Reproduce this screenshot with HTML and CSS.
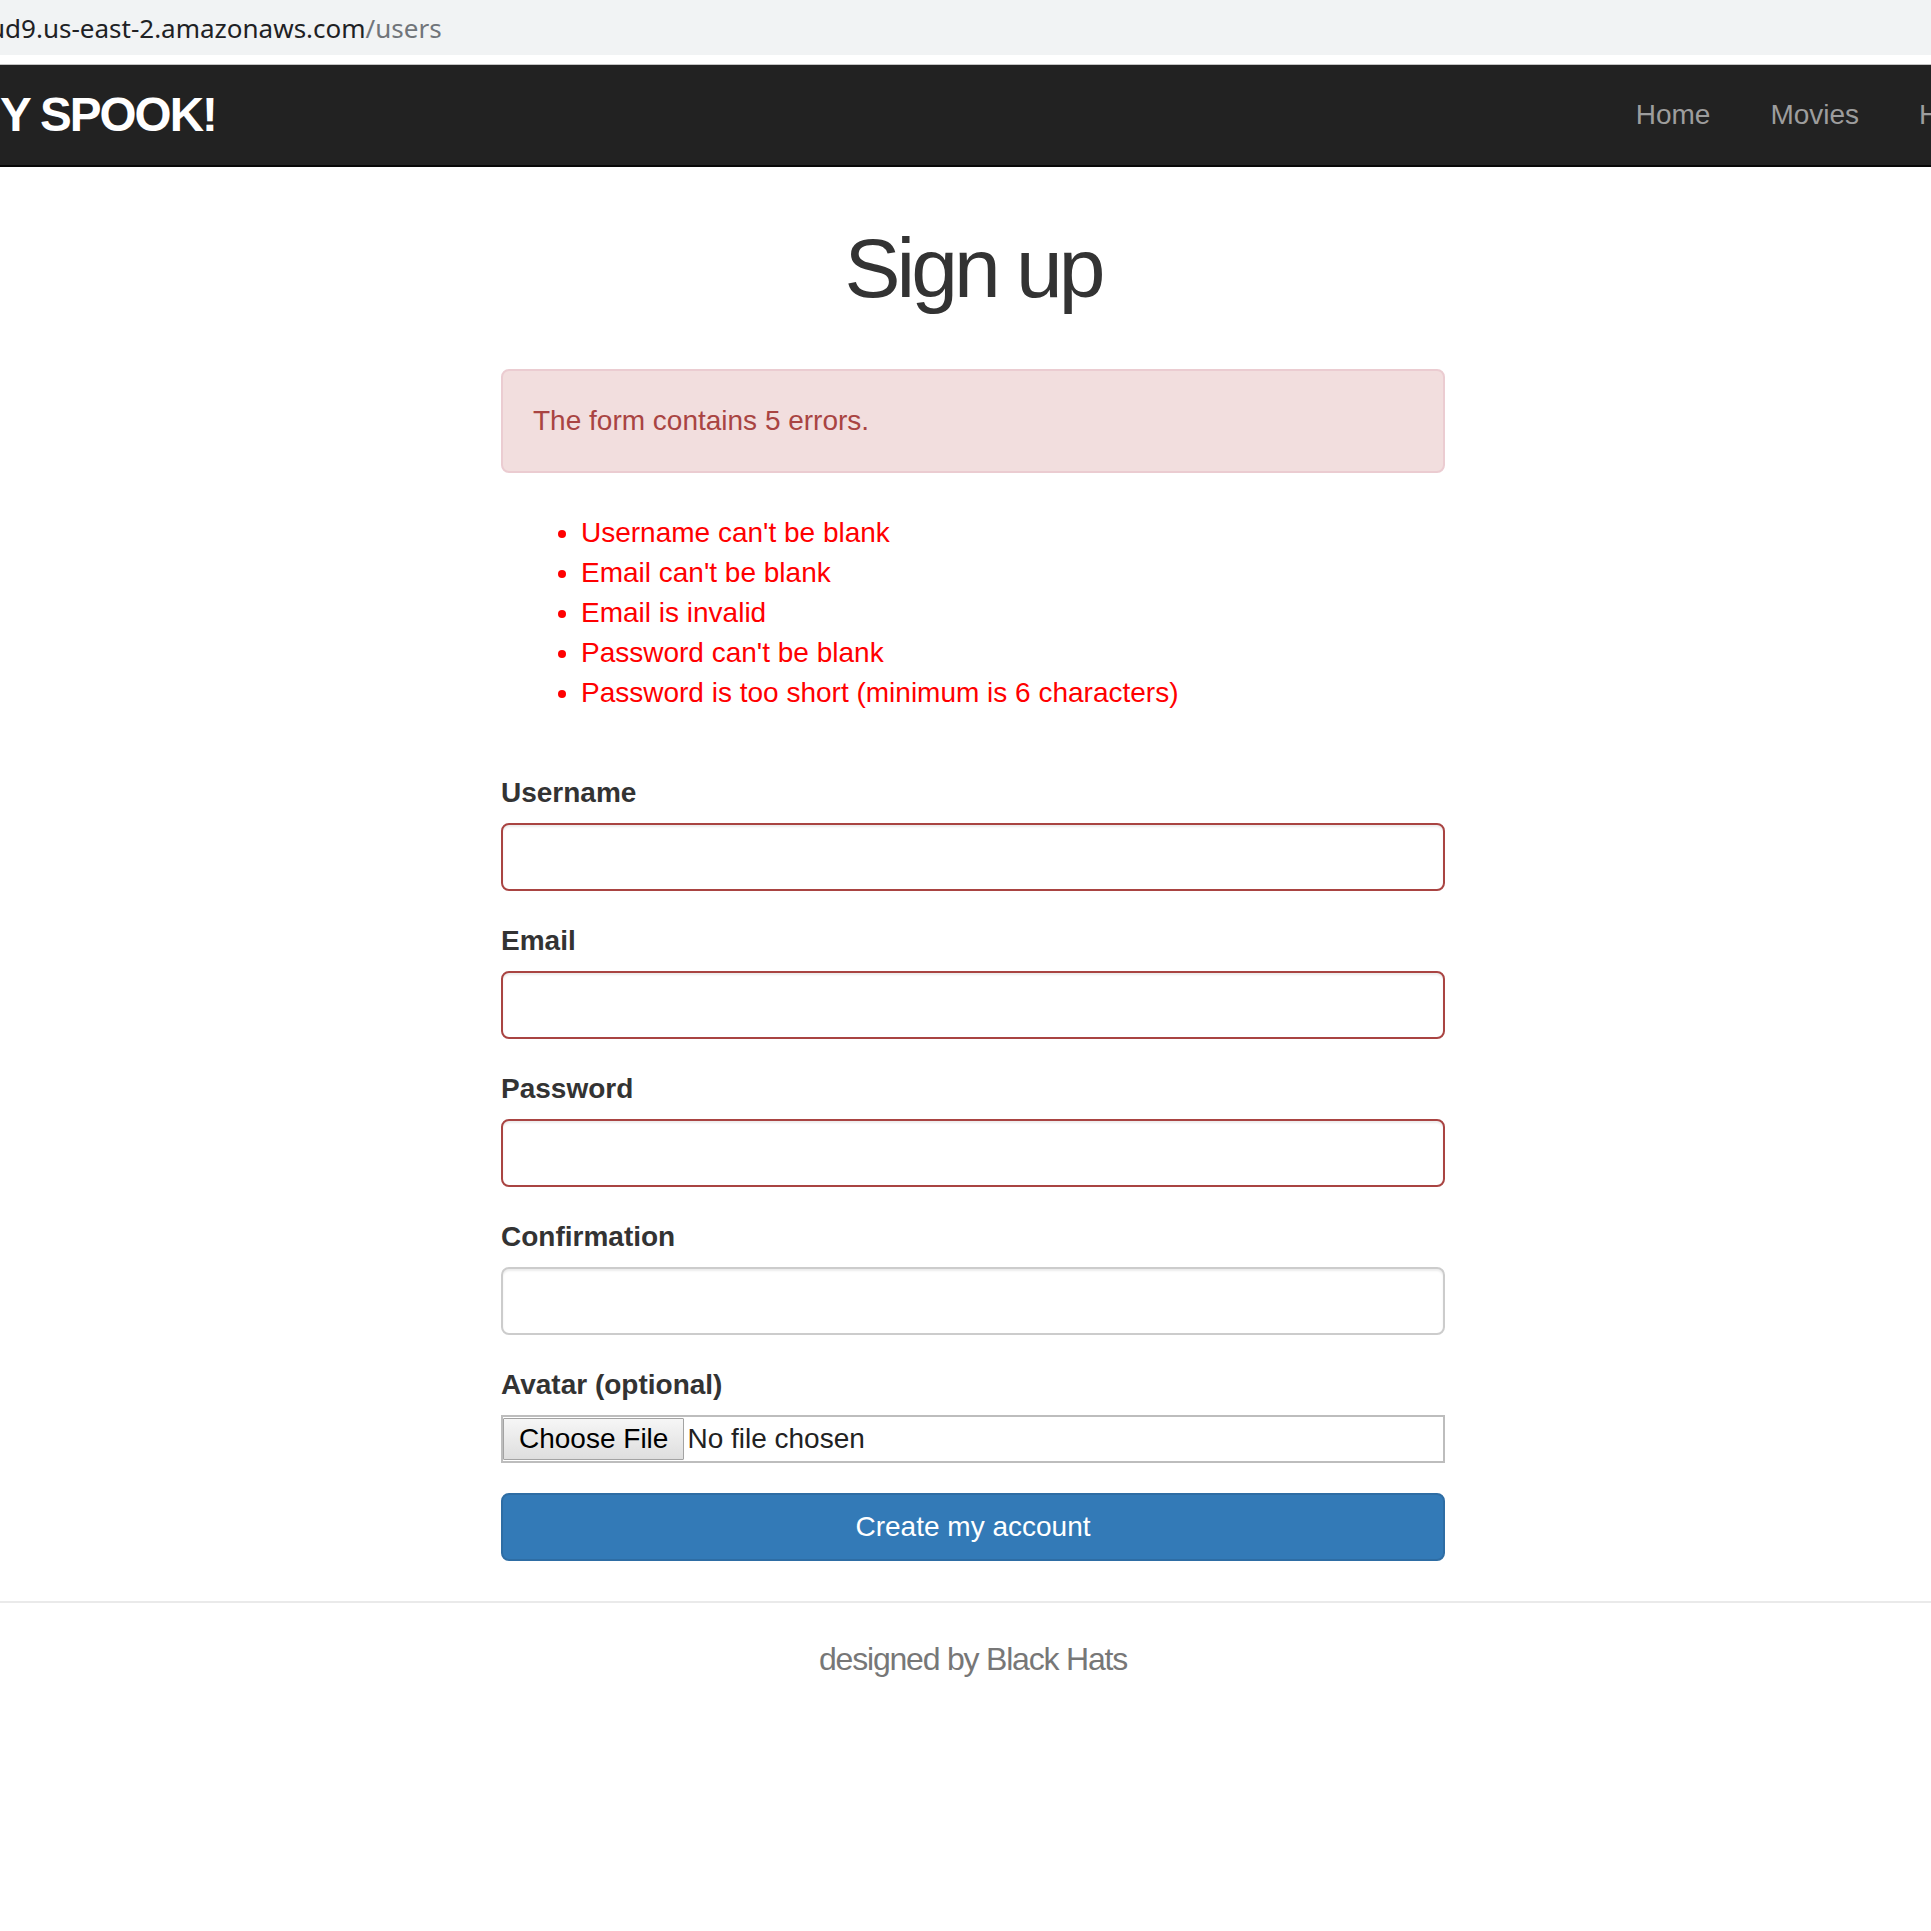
FILE: index.html
```html
<!DOCTYPE html>
<html lang="en">
<head>
<meta charset="utf-8">
<title>Sign up</title>
<link rel="stylesheet" href="styles.css">
</head>
<body>
<div class="chrome">
  <div class="omnibox"><span class="url-host"><span class="url-cut">u</span>d9.us-east-2.amazonaws.com</span><span class="url-path">/users</span></div>
  <div class="chrome-gap"></div>
</div>
<header class="navbar">
  <a class="logo" href="#">Y SPOOK!</a>
  <ul class="nav">
    <li><a href="#">Home</a></li>
    <li><a href="#">Movies</a></li>
    <li><a href="#">Help</a></li>
    <li><a href="#">Log in</a></li>
  </ul>
</header>
<main class="page">
  <div class="col">
    <h1 class="title">Sign up</h1>
    <div class="alert">The form contains 5 errors.</div>
    <ul class="errors">
      <li>Username can't be blank</li>
      <li>Email can't be blank</li>
      <li>Email is invalid</li>
      <li>Password can't be blank</li>
      <li>Password is too short (minimum is 6 characters)</li>
    </ul>
    <form class="form">
      <label class="label">Username</label>
      <input class="field field-error" type="text">
      <label class="label">Email</label>
      <input class="field field-error" type="email">
      <label class="label">Password</label>
      <input class="field field-error" type="password">
      <label class="label">Confirmation</label>
      <input class="field" type="password">
      <label class="label">Avatar (optional)</label>
      <div class="file">
        <span class="file-btn">Choose File</span>
        <span class="file-name">No file chosen</span>
      </div>
      <button class="submit" type="button">Create my account</button>
    </form>
  </div>
</main>
<footer class="footer">
  <div class="footer-text">designed by Black Hats</div>
</footer>
</body>
</html>
```
FILE: styles.css
```css
* { box-sizing: border-box; }

html, body {
  margin: 0;
  padding: 0;
  background: #fff;
  overflow-x: hidden;
}

body {
  font-family: "Liberation Sans", Arial, sans-serif;
  font-size: 28px;
  line-height: 40px;
  color: #333;
}

/* browser chrome */
.chrome {
  border-bottom: 1px solid #c4c4c4;
}
.omnibox {
  height: 55px;
  background: #f1f3f4;
  font-family: "Noto Sans", "Open Sans", sans-serif;
  font-size: 26px;
  line-height: 54px;
  white-space: nowrap;
  overflow: hidden;
  padding-top: 1px;
}
.url-host { color: #202124; }
.url-cut { margin-left: -11px; }
.url-path { color: #70757a; }
.chrome-gap {
  height: 9px;
  background: #fff;
}

/* navbar */
.navbar {
  height: 102px;
  background: #222;
  border-bottom: 2px solid #080808;
  display: flex;
  align-items: center;
  justify-content: space-between;
  overflow: hidden;
}
.logo {
  color: #fff;
  font-weight: bold;
  font-size: 47.6px;
  letter-spacing: -2px;
  text-decoration: none;
  text-transform: uppercase;
  line-height: 60px;
  white-space: nowrap;
}
.nav {
  display: flex;
  list-style: none;
  margin: 0 -212px 0 0;
  padding: 0;
  flex: none;
}
.nav a {
  display: block;
  padding: 30px;
  line-height: 40px;
  color: #9d9d9d;
  text-decoration: none;
  white-space: nowrap;
}

/* page */
.page {
  padding-left: 15px;
}
.col {
  width: 944px;
  margin: 0 auto;
}
.title {
  margin: 55px 0 55px;
  font-size: 84px;
  line-height: 1.1;
  font-weight: 500;
  letter-spacing: -4px;
  text-align: center;
  color: #333;
}
.alert {
  padding: 30px;
  margin-bottom: 40px;
  border: 2px solid #ebccd1;
  border-radius: 8px;
  background: #f2dede;
  color: #a94442;
}
.errors {
  margin: 0 0 60px;
  padding-left: 80px;
  color: red;
}

.form {
  display: flex;
  flex-direction: column;
  align-items: flex-start;
}
.label {
  font-weight: bold;
  margin-bottom: 10px;
}
.field {
  display: block;
  width: 100%;
  height: 68px;
  margin: 0 0 30px;
  padding: 12px 24px;
  font: inherit;
  border: 2px solid #ccc;
  border-radius: 8px;
  background: #fff;
  box-shadow: inset 0 2px 2px rgba(0, 0, 0, 0.075);
}
.field-error {
  border-color: #a94442;
}

.file {
  width: 100%;
  height: 48px;
  margin-bottom: 30px;
  border: 2px solid #bdbdbd;
  display: flex;
  align-items: center;
  gap: 3px;
  padding-left: 0;
}
.file-btn {
  height: 42px;
  display: flex;
  align-items: center;
  padding: 0 15px;
  border: 1px solid #a3a3a3;
  border-radius: 1px;
  background: linear-gradient(#f6f6f6, #dedede);
  color: #000;
  line-height: 40px;
}
.file-name {
  color: #222;
}

.submit {
  width: 100%;
  height: 68px;
  font: inherit;
  color: #fff;
  background: #337ab7;
  border: 2px solid #2e6da4;
  border-radius: 8px;
  text-align: center;
  padding: 0;
}

/* footer */
.footer {
  margin-top: 40px;
  border-top: 2px solid #eaeaea;
  padding: 39px 0 0 15px;
}
.footer-text {
  text-align: center;
  font-size: 32px;
  line-height: 1.1;
  letter-spacing: -1.2px;
  color: #777;
}
```
